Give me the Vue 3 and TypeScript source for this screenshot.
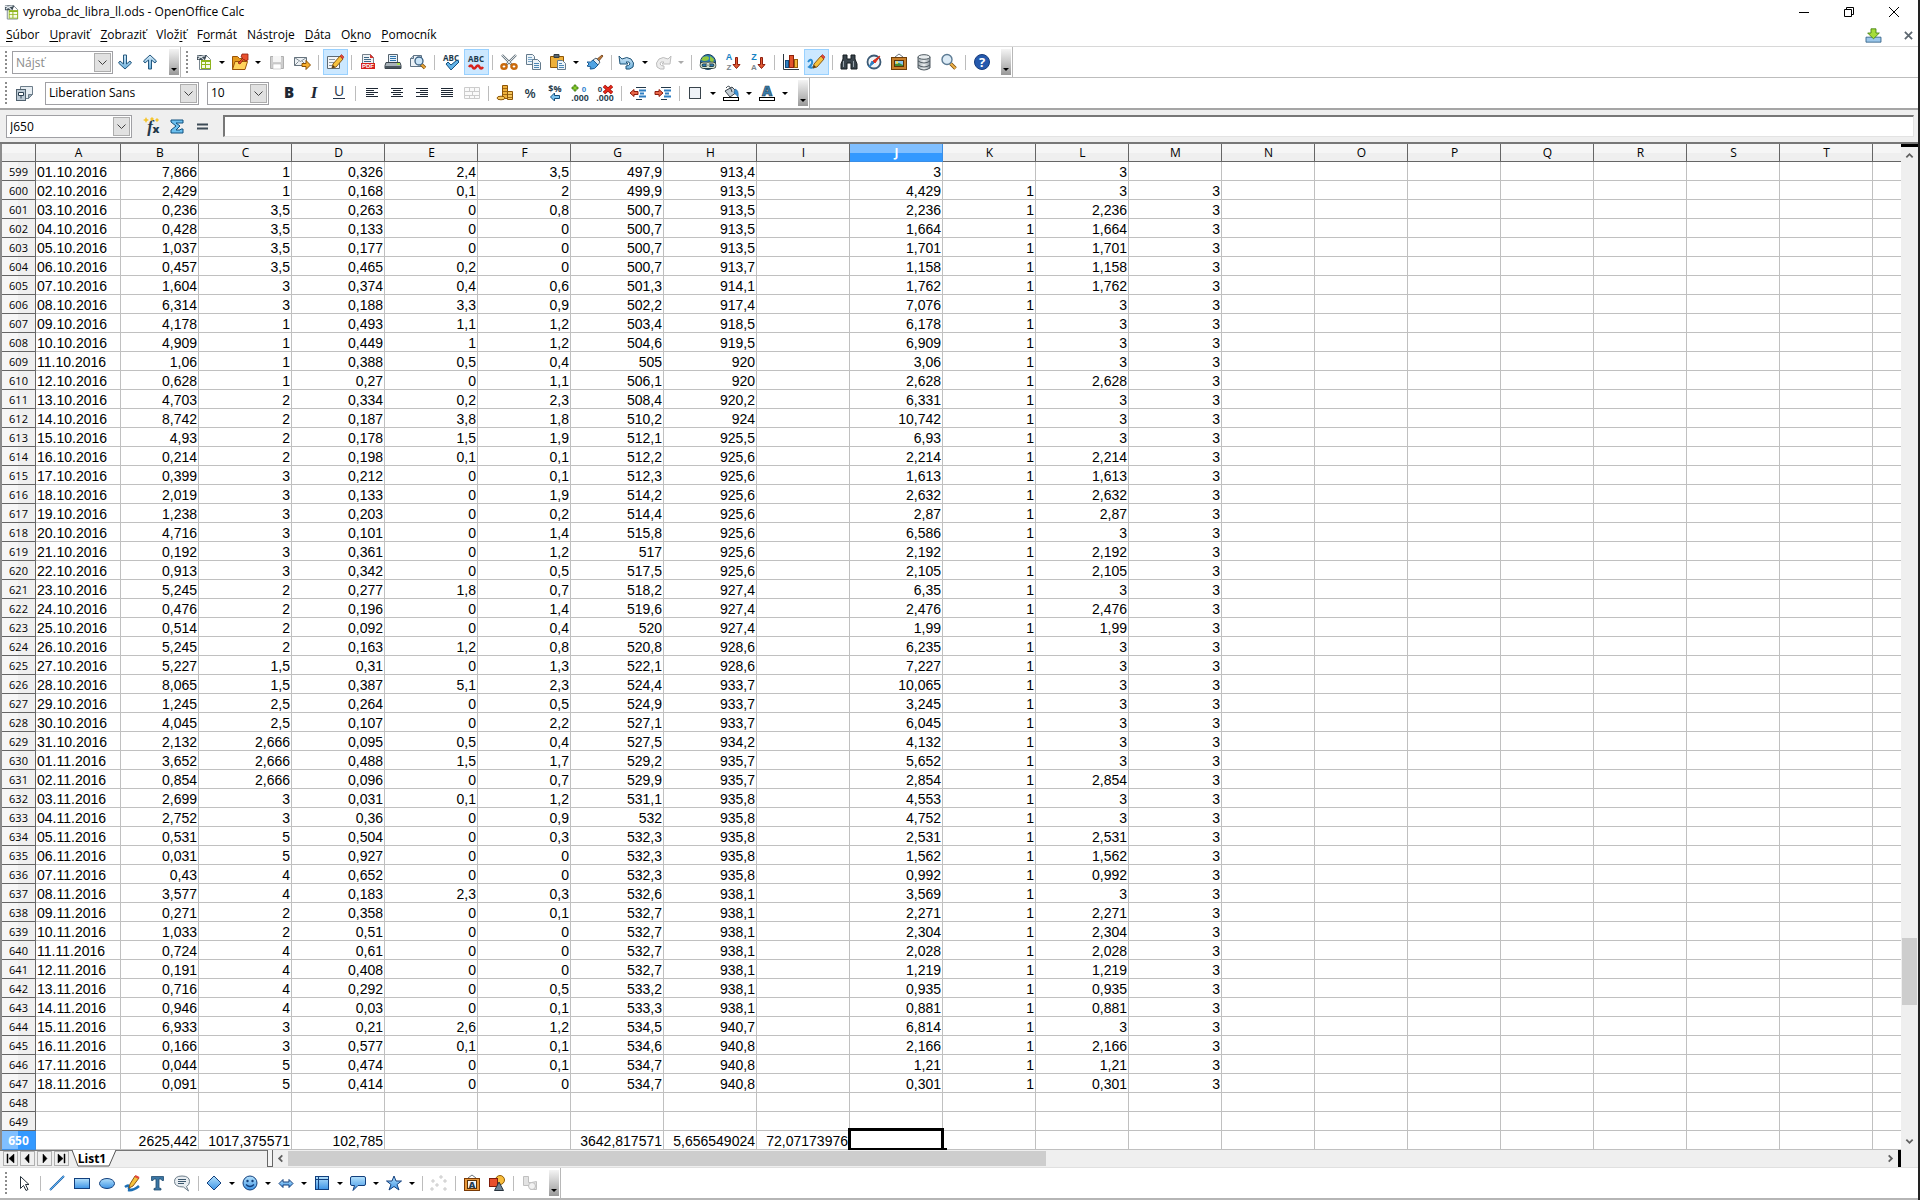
<script setup lang="ts">
import { ref } from 'vue'

interface Tool {
  icon?: string
  label?: string
  drop?: boolean
  on?: boolean
  off?: boolean
  sep?: boolean
}

const sep: Tool = { sep: true }

const menus = [
  ['', 'S', 'úbor'],
  ['', 'U', 'praviť'],
  ['', 'Z', 'obraziť'],
  ['Vlož', 'i', 'ť'],
  ['F', 'o', 'rmát'],
  ['Nás', 't', 'roje'],
  ['', 'D', 'áta'],
  ['O', 'k', 'no'],
  ['', 'P', 'omocník'],
]

const findTools: Tool[] = [
  { icon: 'down', label: 'Nájsť ďalšie' },
  { icon: 'up', label: 'Nájsť predchádzajúce' },
]

const standardTools: Tool[] = [
  { icon: 'calc', label: 'Nový', drop: true },
  { icon: 'open', label: 'Otvoriť', drop: true },
  { icon: 'save', label: 'Uložiť', off: true },
  { icon: 'mail', label: 'Odoslať e-mailom' },
  sep,
  { icon: 'edit', label: 'Upraviť súbor', on: true },
  sep,
  { icon: 'pdf', label: 'Exportovať do PDF' },
  { icon: 'print', label: 'Tlačiť' },
  { icon: 'preview', label: 'Ukážka strany' },
  sep,
  { icon: 'spell', label: 'Kontrola pravopisu' },
  { icon: 'autospell', label: 'Automatická kontrola pravopisu', on: true },
  sep,
  { icon: 'cut', label: 'Vystrihnúť' },
  { icon: 'copy', label: 'Kopírovať' },
  { icon: 'paste', label: 'Vložiť', drop: true },
  { icon: 'brush', label: 'Štetec formátu' },
  sep,
  { icon: 'undo', label: 'Späť', drop: true },
  { icon: 'redo', label: 'Znova', drop: true, off: true },
  sep,
  { icon: 'globe', label: 'Hypertextový odkaz' },
  { icon: 'sortaz', label: 'Zoradiť vzostupne' },
  { icon: 'sortza', label: 'Zoradiť zostupne' },
  sep,
  { icon: 'chart', label: 'Graf' },
  { icon: 'draw', label: 'Funkcie kreslenia', on: true },
  sep,
  { icon: 'binoc', label: 'Nájsť a nahradiť' },
  { icon: 'compass', label: 'Navigátor' },
  { icon: 'gallery', label: 'Galéria' },
  { icon: 'db', label: 'Zdroje údajov' },
  { icon: 'zoom', label: 'Lupa' },
  sep,
  { icon: 'help', label: 'Pomocník' },
]

const formatTools: Tool[] = [
  { icon: 'bold', label: 'Tučné' },
  { icon: 'italic', label: 'Kurzíva' },
  { icon: 'underline', label: 'Podčiarknuté' },
  sep,
  { icon: 'alignl', label: 'Zarovnať vľavo' },
  { icon: 'alignc', label: 'Centrovať' },
  { icon: 'alignr', label: 'Zarovnať vpravo' },
  { icon: 'alignj', label: 'Do bloku' },
  { icon: 'merge', label: 'Zlúčiť bunky', off: true },
  sep,
  { icon: 'coins', label: 'Mena' },
  { icon: 'percent', label: 'Percentá' },
  { icon: 'stdnum', label: 'Štandardný formát' },
  { icon: 'adddec', label: 'Pridať desatinné miesto' },
  { icon: 'deldec', label: 'Odobrať desatinné miesto' },
  sep,
  { icon: 'outdent', label: 'Zmenšiť odsadenie' },
  { icon: 'indent', label: 'Zväčšiť odsadenie' },
  sep,
  { icon: 'border', label: 'Orámovanie', drop: true },
  { icon: 'bucket', label: 'Farba pozadia', drop: true },
  { icon: 'fontcolor', label: 'Farba písma', drop: true },
]

const drawTools: Tool[] = [
  { icon: 'cursor', label: 'Vybrať' },
  sep,
  { icon: 'line', label: 'Čiara' },
  { icon: 'rect', label: 'Obdĺžnik' },
  { icon: 'ellipse', label: 'Elipsa' },
  { icon: 'freehand', label: 'Čiara voľnou rukou' },
  { icon: 'text', label: 'Text' },
  { icon: 'bubble', label: 'Popisy' },
  sep,
  { icon: 'diamond', label: 'Základné tvary', drop: true },
  { icon: 'smiley', label: 'Symboly', drop: true },
  { icon: 'arrows', label: 'Blokové šípky', drop: true },
  { icon: 'flow', label: 'Vývojové diagramy', drop: true },
  { icon: 'callout', label: 'Bubliny', drop: true },
  { icon: 'star', label: 'Hviezdy', drop: true },
  sep,
  { icon: 'points', label: 'Body', off: true },
  sep,
  { icon: 'fontwork', label: 'Galéria Fontwork' },
  { icon: 'fromfile', label: 'Zo súboru' },
  sep,
  { icon: 'extrude', label: 'Priestorové zobrazenie', off: true },
]

const lines = (rows: number[][]) =>
  rows.map(([x, y, w]) => `<rect x="${x}" y="${y}" width="${w}" height="1" fill="#1d2733"/>`).join('')

const calcArt =
  '<path d="M5.500 3.500h7l4 4v10h-11z" fill="#fff" stroke="#7a8791"/><path d="M3 3h10l-2 5H3z" fill="#3f4d58"/><path d="M3 4q4 0 7 4M4 7q4-4 7-3" stroke="#dfe6ea" stroke-width="1.200" fill="none"/><rect x="7" y="8" width="10" height="9" fill="#8fb51c"/><path d="M8 10h3v2H8zM12 10h4v2h-4zM8 13h3v3H8zM12 13h4v3h-4z" fill="#f7fbe8"/>'
const pencil =
  '<path d="M8 12L15 4l3 3-7 8-4 1z" fill="#f7c23c" stroke="#8b5a14"/><path d="M15 4l1.500-1.500 2.500 2.500L17.500 7z" fill="#e2493a" stroke="#a12a20" stroke-width=".6"/><path d="M7 16l1-3 2 2z" fill="#4a3520"/>'

const icons: Record<string, string> = {
  down: '<path d="M8.500 3h3v9l3.500-3 1.500 2-6.500 6-6.500-6L5 9l3.500 3z" fill="url(#steel)" stroke="#24587f" stroke-linejoin="round"/>',
  up: '<path d="M8.500 17h3V8l3.500 3 1.500-2L10 3 3.500 9 5 11l3.500-3z" fill="url(#steel)" stroke="#24587f" stroke-linejoin="round"/>',
  calc: calcArt,
  open: '<path d="M2.500 17.500v-13h5l2 2h7v4" fill="#e59a1b" stroke="#9b5408"/><path d="M2.500 17.500l2.500-8h12.500l-2.500 8z" fill="#ffd45c" stroke="#9b5408"/><path d="M8 11l5-5-2-1 1-3h6v6l-3 1-1-2-4 5z" fill="#e8502e" stroke="#8e1d0d" stroke-width=".8"/>',
  save: '<path d="M3.500 4.500h13v12h-13z" fill="#cfcfcf" stroke="#b0b0b0"/><path d="M6 4h8v6H6z" fill="#f6f6f6"/><path d="M6 12h8v5H6z" fill="#fff" stroke="#bbb" stroke-width=".6"/>',
  mail: '<path d="M2.500 5.500h12v8h-12z" fill="#eef2f5" stroke="#66737e"/><path d="M2.500 5.500l6 4 6-4M2.500 13.500l4-4M14 13l-4-4" fill="none" stroke="#66737e" stroke-width=".8"/><path d="M10 11.500h4v-3l4.500 4.500-4.500 4.500v-3h-4z" fill="#f6ae2d" stroke="#8a5005"/>',
  edit: '<path d="M2.500 4.500h12v12h-12z" fill="#f4f6f7" stroke="#5d6a74"/><path d="M4 7.500h6M4 10.500h5M4 13.500h3" stroke="#8a97a0"/>' + pencil,
  pdf: '<path d="M4.500 2.500h8l3 3v11h-11z" fill="#eef2f5" stroke="#75818b"/><path d="M12 2l4 4h-4z" fill="#d8332c"/><path d="M6 5.500h5M6 7.500h7M6 9.500h7" stroke="#3f6784"/><rect x="3" y="11" width="14" height="6" fill="#d5201c"/><text x="10" y="16" font-size="6" font-weight="700" text-anchor="middle" fill="#fff" font-family="Liberation Sans">PDF</text>',
  print: '<path d="M5.500 2.500h9v8h-9z" fill="#e7f1fa" stroke="#55636e"/><path d="M7 4.500h6M7 6.500h6M7 8.500h6" stroke="#2d74ab"/><path d="M3 10.500h14l1 3v3H2v-3z" fill="#a9b3ba" stroke="#39444c"/><path d="M2 14h16v2H2z" fill="#4a565e"/><rect x="14" y="11" width="3" height="2" fill="#a6e04f"/>',
  preview: '<path d="M5.500 3.500h8v11h-11v-8z" fill="#edf2f6" stroke="#5f7385"/><path d="M5.500 3.500v3h-3" fill="#b9c9d6" stroke="#5f7385"/><path d="M13 12l4 4" stroke="#7d4e0c" stroke-width="3.400"/><path d="M13 12l4 4" stroke="#eaa83a" stroke-width="1.800"/><circle cx="11" cy="9" r="4" fill="#cbe5f8" stroke="#3a5f80" stroke-width="1.300"/>',
  spell: '<text x="10" y="9" font-size="8" font-weight="700" text-anchor="middle" fill="#1d3a4c" font-family="Open Sans">ABC</text><path d="M5 12l2-2 3 3 6-5 2 2-8 8z" fill="#62b3e8" stroke="#13507e" stroke-linejoin="round"/>',
  autospell: '<text x="10" y="10" font-size="8" font-weight="700" text-anchor="middle" fill="#1d3a4c" font-family="Open Sans">ABC</text><path d="M3 15q2-3 3.500 0t3.500 0t3.500 0t3.500 0" fill="none" stroke="#d8231c" stroke-width="2.600"/>',
  cut: '<path d="M3 3l10 10M17 3L7 13" stroke="#6e7b84" stroke-width="2.400"/><path d="M3 3l9 9M17 3l-9 9" stroke="#dde3e7"/><ellipse cx="5" cy="14.500" rx="2.600" ry="2.300" fill="none" stroke="#c96a0e" stroke-width="2.400"/><ellipse cx="15" cy="14.500" rx="2.600" ry="2.300" fill="none" stroke="#c96a0e" stroke-width="2.400"/>',
  copy: '<path d="M2.500 2.500h6l2 2v8h-8z" fill="#edf4f9" stroke="#647a8c"/><path d="M4 5.500h4M4 7.500h5M4 9.500h5" stroke="#77a4c6"/><path d="M8.500 7.500h5l3 3v7h-8z" fill="#edf4f9" stroke="#647a8c"/><path d="M10 11.500h5M10 13.500h5M10 15.500h5" stroke="#4c87b5"/>',
  paste: '<path d="M2.500 4.500h13v11h-13z" fill="#eeb03a" stroke="#8d5507"/><path d="M6 5.500v-3h5v3z" fill="#59656d" stroke="#333c42"/><path d="M9.500 8.500h5l3 3v6h-8z" fill="#edf4f9" stroke="#647a8c"/><path d="M11 11.500h3M11 13.500h5M11 15.500h5" stroke="#4c87b5"/>',
  brush: '<path d="M11 8l6-5 1 1-5 6z" fill="#c07a3a" stroke="#6b3a10" stroke-width=".8"/><path d="M8 8l3-2 4 4-2 3z" fill="#e8edf0" stroke="#4d6273"/><path d="M8 8l5 5q-3 5-8 4l1-2-4-1 2-2-2-2q4 1 6-2z" fill="#4fa3e3" stroke="#1c5c94"/>',
  undo: '<path d="M2 4l3 3q5-3 9 0 4 4 2 8-3 3-7 2v-3q3 0 4-2 0-3-4-2l2 2H3z" fill="url(#steel)" stroke="#1f5478" stroke-linejoin="round"/>',
  redo: '<path d="M18 4l-3 3q-5-3-9 0-4 4-2 8 3 3 7 2v-3q-3 0-4-2 0-3 4-2l-2 2h8z" fill="#ececec" stroke="#bdbdbd" stroke-linejoin="round"/>',
  globe: '<circle cx="10" cy="10" r="7.500" fill="#2e7cb4" stroke="#173f5e"/><path d="M5 5q6-2 6 1T6 9L3 8zM12 4l4 3-1 4-3-2z" fill="#93c83e"/><rect x="3" y="11" width="8" height="4.500" rx="2.200" fill="none" stroke="#24332b" stroke-width="2.600"/><rect x="9" y="11" width="8" height="4.500" rx="2.200" fill="none" stroke="#24332b" stroke-width="2.600"/><rect x="3" y="11" width="8" height="4.500" rx="2.200" fill="none" stroke="#d7e6d9" stroke-width="1.200"/><rect x="9" y="11" width="8" height="4.500" rx="2.200" fill="none" stroke="#d7e6d9" stroke-width="1.200"/>',
  sortaz: '<text x="6" y="8" font-size="9" font-weight="700" text-anchor="middle" fill="#1583c4" font-family="Liberation Sans">A</text><text x="6" y="18" font-size="8" font-weight="700" text-anchor="middle" fill="#7b858c" font-family="Liberation Sans">Z</text><path d="M12.500 5.500h2v7h2.500l-3.500 4-3.500-4h2.500z" fill="#e05a33" stroke="#8e1d0d"/>',
  sortza: '<text x="6" y="8" font-size="9" font-weight="700" text-anchor="middle" fill="#1583c4" font-family="Liberation Sans">Z</text><text x="6" y="18" font-size="8" font-weight="700" text-anchor="middle" fill="#7b858c" font-family="Liberation Sans">A</text><path d="M12.500 5.500h2v7h2.500l-3.500 4-3.500-4h2.500z" fill="#e05a33" stroke="#8e1d0d"/>',
  chart: '<path d="M2.500 2v15.500H18" fill="none" stroke="#2b3740"/><rect x="4.500" y="8.500" width="3" height="7" fill="#2f7fc2" stroke="#164a78"/><rect x="8.500" y="3.500" width="4" height="12" fill="#e2532b" stroke="#8e220c"/><rect x="13.500" y="7.500" width="3" height="8" fill="#f4b63a" stroke="#93600b"/>',
  draw: '<path d="M2 10q3-4 4-1t-3 6q3 2 6-1" fill="none" stroke="#2a8ad0" stroke-width="2"/>' + pencil,
  binoc: '<path d="M4 3h4v4h4V3h4v4l2 5v5h-6v-6H8v6H2v-5l2-5z" fill="#39444c" stroke="#151c21"/><path d="M4.500 9v6M14.500 9v6" stroke="#9aa6ae"/>',
  compass: '<circle cx="10" cy="10" r="6.500" fill="#f1f5f8" stroke="#3c5a75" stroke-width="1.800"/><path d="M16 4l-5 7-2-2z" fill="#d9301f" stroke="#d9301f"/><path d="M5 15l3-6 2 2z" fill="#2f7fc2" stroke="#2f7fc2"/>',
  gallery: '<path d="M6 5l4-3 4 3" fill="none" stroke="#6b7780"/><rect x="2.500" y="5.500" width="15" height="12" fill="#c77f2b" stroke="#6e3d08"/><rect x="5.500" y="8.500" width="9" height="6" fill="#86c5ee" stroke="#5a3206"/><path d="M6 14v-2l4-1 4 2v1z" fill="#3f8c3a"/><circle cx="8" cy="10.500" r="1.200" fill="#ffe14a"/>',
  db: '<path d="M4 5v11q6 4 12 0V5z" fill="url(#metal)" stroke="#4e5960"/><ellipse cx="10" cy="5" rx="6" ry="2.300" fill="#e9edef" stroke="#4e5960"/><path d="M4 9q6 4 12 0M4 13q6 4 12 0" fill="none" stroke="#4e5960"/>',
  zoom: '<path d="M11.500 11.500l5 5" stroke="#7d4e0c" stroke-width="3.600"/><path d="M11.500 11.500l5 5" stroke="#f1b44a" stroke-width="1.800"/><circle cx="8" cy="7.500" r="5" fill="#dcebf6" stroke="#5c7b94" stroke-width="1.400"/>',
  help: '<circle cx="10" cy="10" r="7.500" fill="#2559ad" stroke="#163c7c"/><text x="10" y="15" font-size="13" font-weight="700" text-anchor="middle" fill="#fff" font-family="Open Sans">?</text>',
  styles: '<path d="M6.500 3.500h12v8l-4 4h-8z" fill="#e6edf2" stroke="#6d7d8a"/><path d="M18.500 11.500h-4v4z" fill="#9fb0bd" stroke="#6d7d8a"/><rect x="2.500" y="6.500" width="9" height="11" fill="#bccad5" stroke="#51626f"/><path d="M4.500 9.500h5v3h-5zM7 12.500v3" fill="#fff" stroke="#2c4152"/>',
  bold: '<text x="10" y="15" font-size="15" font-weight="800" text-anchor="middle" fill="#1d2733" font-family="Open Sans">B</text>',
  italic: '<text x="10" y="15" font-size="17" font-style="italic" text-anchor="middle" fill="#1d2733" font-family="Liberation Serif" font-weight="700">I</text>',
  underline: '<text x="10" y="13" font-size="14" text-anchor="middle" fill="#26354a" font-family="Open Sans">U</text><rect x="4" y="15" width="12" height="1" fill="#26354a"/>',
  alignl: lines([[4, 5, 12], [4, 7, 8], [4, 9, 12], [4, 11, 8], [4, 13, 12]]),
  alignc: lines([[4, 5, 12], [6, 7, 8], [4, 9, 12], [6, 11, 8], [4, 13, 12]]),
  alignr: lines([[4, 5, 12], [8, 7, 8], [4, 9, 12], [8, 11, 8], [4, 13, 12]]),
  alignj: lines([[4, 5, 12], [4, 7, 12], [4, 9, 12], [4, 11, 12], [4, 13, 12]]),
  merge: '<path d="M2.500 4.500h15v11h-15zM2.500 8.500h15M2.500 12.500h15M7.500 4.500v4M12.500 4.500v4M7.500 12.500v3M12.500 12.500v3M10.500 8.500v4" fill="#fafafa" stroke="#cccccc"/>',
  coins: '<path d="M7.500 2.500h5v13h-5z" fill="#f0b23c" stroke="#8d5507"/><path d="M7 5.500h6M7 8.500h6M7 11.500h6" stroke="#8d5507" stroke-width=".8"/><path d="M12.500 8.500h5v8h-5z" fill="#f6c75c" stroke="#8d5507"/><path d="M12 11.500h6M12 14.500h6" stroke="#8d5507" stroke-width=".8"/><ellipse cx="6" cy="15" rx="4" ry="1.800" fill="#f6c75c" stroke="#8d5507"/>',
  percent: '<text x="10" y="15" font-size="13" font-weight="600" text-anchor="middle" fill="#24394a" font-family="Open Sans">%</text>',
  stdnum: '<text x="10" y="9" font-size="9" font-weight="700" text-anchor="middle" fill="#24394a" font-family="Open Sans">$%</text><path d="M5.500 14l4-4v2.500h5v3h-5V18z" fill="#7cc4f0" stroke="#13507e"/>',
  adddec: '<path d="M4 2h2v2h2v2H6v2H4V6H2V4h2z" fill="#8ad02e" stroke="#3d7a0a" stroke-width=".8"/><text x="14" y="9" font-size="8" font-weight="700" text-anchor="middle" fill="#2f7fd0" font-family="Liberation Sans">0</text><text x="10" y="18" font-size="9" font-weight="700" text-anchor="middle" fill="#24394a" font-family="Liberation Sans">.000</text>',
  deldec: '<text x="5" y="9" font-size="8" font-weight="700" text-anchor="middle" fill="#24394a" font-family="Liberation Sans">0</text><text x="10" y="18" font-size="9" font-weight="700" text-anchor="middle" fill="#24394a" font-family="Liberation Sans">.000</text><path d="M9 3l8 7M17 3l-8 7" stroke="#8e1008" stroke-width="3.400"/><path d="M9 3l8 7M17 3l-8 7" stroke="#e8281c" stroke-width="2.200"/>',
  outdent: '<path d="M2 10l4-3.500v2h4v3H6v2z" fill="#e8674a" stroke="#8e1d0d"/><path d="M8 4.500h10M8 16.500h6" stroke="#24394a"/><path d="M11 7.500h7M12 10.500h4M11 13.500h7" stroke="#2f7fc2" stroke-width="2"/>',
  indent: '<path d="M10 10L6 6.500v2H2v3h4v2z" fill="#e8674a" stroke="#8e1d0d"/><path d="M8 4.500h10M8 16.500h6" stroke="#24394a"/><path d="M11 7.500h7M12 10.500h4M11 13.500h7" stroke="#2f7fc2" stroke-width="2"/>',
  border: '<rect x="4.500" y="4.500" width="11" height="11" fill="#eef2f7" stroke="#39444c"/>',
  bucket: '<path d="M4 8l7-4 5 5-7 5z" fill="#c3ccd3" stroke="#39444c"/><path d="M5 5q3-4 5 1l1 3" fill="none" stroke="#39444c"/><path d="M14 6q4 1 3 8-2-3-4-4z" fill="#3c93d6" stroke="#1d5d92" stroke-width=".6"/><rect x="2.500" y="14.500" width="15" height="3" fill="#fff" stroke="#000"/>',
  fontcolor: '<text x="10" y="13" font-size="14" font-weight="800" text-anchor="middle" fill="#3a7ca8" stroke="#1b3c55" stroke-width=".6" font-family="Open Sans">A</text><rect x="2.500" y="14.500" width="15" height="3" fill="#fff" stroke="#000"/>',
  fx: '<text x="8" y="16" font-size="17" font-style="italic" font-weight="700" text-anchor="middle" fill="#24394a" font-family="Liberation Serif">f</text><text x="14" y="17" font-size="11" font-weight="800" text-anchor="middle" fill="#24394a" font-family="Open Sans">x</text><path d="M4 1l1 2 2 1-2 1-1 2-1-2-2-1 2-1zM10 1l1 1 1 1-1 1-1 1-1-1-1-1 1-1zM15 2l1 1 1 1-1 1-1 1-1-1-1-1 1-1z" fill="#f6c52e"/>',
  sum: '<path d="M4 4h12v3h-3H9l4 3-4 4h4l1-1h2v4H4v-3l5-4-5-4z" fill="#6cc0ef" stroke="#11507e" stroke-linejoin="round"/>',
  equals: '<path d="M5 8.500h11M5 12.500h11" stroke="#3d4b56" stroke-width="2"/>',
  cursor: '<path d="M6.500 3.500v12l3-3 2.500 5 2-1-2.500-5h3.500z" fill="#fff" stroke="#25303a"/>',
  line: '<path d="M3 17L17 3" stroke="#1c5fa8" stroke-width="2"/><path d="M3 17L17 3" stroke="#58b0f0"/>',
  rect: '<rect x="2.500" y="5.500" width="15" height="10" fill="url(#blue)" stroke="#123f7d"/>',
  ellipse: '<ellipse cx="10" cy="10.500" rx="7.500" ry="5" fill="url(#blue)" stroke="#123f7d"/>',
  freehand: '<path d="M3 14q4-3 4 0t-1 3q5 1 11-4" fill="none" stroke="#1c6fb5" stroke-width="2.600"/><path d="M8 11l5-8 4 2-6 8-4 2z" fill="#f7c23c" stroke="#8b5a14"/><path d="M13.500 2l4 2-1 2-4-2z" fill="#e2493a"/>',
  text: '<path d="M4.500 3.500h12v4H15L14 6h-2v9l2 .5V17H7v-1.500l2-.5V6H7L6 7.500H4.500z" fill="#3a76a4" stroke="#1f4b70" stroke-width=".8"/>',
  bubble: '<path d="M10 3q7.500 0 7.500 5.500 0 3.500-3 5l2 4.500-5-4q-9 0-9-5.500Q2.500 3 10 3z" fill="#e8edf1" stroke="#6d7d8a"/><path d="M6 6.500h8M6 8.500h8M6 10.500h6" stroke="#3b566c"/>',
  diamond: '<path d="M10 3l7 7-7 7-7-7z" fill="url(#blue)" stroke="#123f7d"/>',
  smiley: '<circle cx="10" cy="10" r="7" fill="url(#blue)" stroke="#123f7d"/><circle cx="7.500" cy="8" r="1.200" fill="#123f7d"/><circle cx="12.500" cy="8" r="1.200" fill="#123f7d"/><path d="M6 11.500q4 4 8 0" fill="none" stroke="#123f7d" stroke-width="1.300"/>',
  arrows: '<path d="M3 10.500l4-4V9h6V6.500l4 4-4 4V12H7v2.500z" fill="url(#blue)" stroke="#123f7d"/>',
  flow: '<rect x="3.500" y="3.500" width="13" height="13" fill="url(#blue)" stroke="#123f7d"/><path d="M6.500 3.500v13M3.500 6.500h13" stroke="#123f7d"/>',
  callout: '<path d="M4 3.500h12q1.500 0 1.500 1.500v6q0 1.500-1.500 1.500h-6l-5 5 1.500-5H4q-1.500 0-1.500-1.500V5Q2.500 3.500 4 3.500z" fill="url(#blue)" stroke="#123f7d"/>',
  star: '<path d="M10 3l2 5h5.500l-4.500 3.500 2 5.500-5-3.500L5 17l2-5.500L2.500 8H8z" fill="url(#blue)" stroke="#123f7d"/>',
  points: '<g fill="#f4f4f4" stroke="#c8c8c8"><circle cx="4" cy="8" r="1.200"/><circle cx="12" cy="4" r="1.200"/><circle cx="8" cy="12" r="1.200"/><circle cx="16" cy="8" r="1.200"/><circle cx="3" cy="16" r="1.200"/><circle cx="16" cy="16" r="1.200"/></g>',
  fontwork: '<path d="M6 5l4-3 4 3" fill="none" stroke="#6b7780"/><rect x="2.500" y="5.500" width="15" height="12" fill="#e8973a" stroke="#7a3a05"/><rect x="5.500" y="7.500" width="9" height="8" fill="#f4f6f8" stroke="#5a3206"/><text x="10" y="15" font-size="9" font-weight="800" text-anchor="middle" fill="#203a50" font-family="Open Sans">A</text>',
  fromfile: '<circle cx="13" cy="7" r="4.500" fill="#f8bd3c" stroke="#935e08"/><rect x="2.500" y="5.500" width="8" height="8" fill="#e8502e" stroke="#7f1c0a"/><path d="M12 9l4.500 8.500h-9z" fill="#6e8395" stroke="#27333d"/>',
  extrude: '<path d="M3.500 3.500h5v6h3l5-1v8h-6v-4h-7z" fill="#e3e3e3" stroke="#c0c0c0"/><circle cx="12" cy="13" r="3.500" fill="#f2f2f2" stroke="#c0c0c0"/>',
  update: '<path d="M1 11h18v6H1z" fill="#9cc7ea" stroke="#2d5c82"/><path d="M7 1h6v5h4l-7 7-7-7h4z" fill="#a6dc3a" stroke="#3f7d0c" stroke-linejoin="round"/>',
}

const columns = 'ABCDEFGHIJKLMNOPQRST'.split('')

/* Production B..H and the buffer value J, one line per day */
const daily = `7,866 1 0,326 2,4 3,5 497,9 913,4 3
2,429 1 0,168 0,1 2 499,9 913,5 4,429
0,236 3,5 0,263 0 0,8 500,7 913,5 2,236
0,428 3,5 0,133 0 0 500,7 913,5 1,664
1,037 3,5 0,177 0 0 500,7 913,5 1,701
0,457 3,5 0,465 0,2 0 500,7 913,7 1,158
1,604 3 0,374 0,4 0,6 501,3 914,1 1,762
6,314 3 0,188 3,3 0,9 502,2 917,4 7,076
4,178 1 0,493 1,1 1,2 503,4 918,5 6,178
4,909 1 0,449 1 1,2 504,6 919,5 6,909
1,06 1 0,388 0,5 0,4 505 920 3,06
0,628 1 0,27 0 1,1 506,1 920 2,628
4,703 2 0,334 0,2 2,3 508,4 920,2 6,331
8,742 2 0,187 3,8 1,8 510,2 924 10,742
4,93 2 0,178 1,5 1,9 512,1 925,5 6,93
0,214 2 0,198 0,1 0,1 512,2 925,6 2,214
0,399 3 0,212 0 0,1 512,3 925,6 1,613
2,019 3 0,133 0 1,9 514,2 925,6 2,632
1,238 3 0,203 0 0,2 514,4 925,6 2,87
4,716 3 0,101 0 1,4 515,8 925,6 6,586
0,192 3 0,361 0 1,2 517 925,6 2,192
0,913 3 0,342 0 0,5 517,5 925,6 2,105
5,245 2 0,277 1,8 0,7 518,2 927,4 6,35
0,476 2 0,196 0 1,4 519,6 927,4 2,476
0,514 2 0,092 0 0,4 520 927,4 1,99
5,245 2 0,163 1,2 0,8 520,8 928,6 6,235
5,227 1,5 0,31 0 1,3 522,1 928,6 7,227
8,065 1,5 0,387 5,1 2,3 524,4 933,7 10,065
1,245 2,5 0,264 0 0,5 524,9 933,7 3,245
4,045 2,5 0,107 0 2,2 527,1 933,7 6,045
2,132 2,666 0,095 0,5 0,4 527,5 934,2 4,132
3,652 2,666 0,488 1,5 1,7 529,2 935,7 5,652
0,854 2,666 0,096 0 0,7 529,9 935,7 2,854
2,699 3 0,031 0,1 1,2 531,1 935,8 4,553
2,752 3 0,36 0 0,9 532 935,8 4,752
0,531 5 0,504 0 0,3 532,3 935,8 2,531
0,031 5 0,927 0 0 532,3 935,8 1,562
0,43 4 0,652 0 0 532,3 935,8 0,992
3,577 4 0,183 2,3 0,3 532,6 938,1 3,569
0,271 2 0,358 0 0,1 532,7 938,1 2,271
1,033 2 0,51 0 0 532,7 938,1 2,304
0,724 4 0,61 0 0 532,7 938,1 2,028
0,191 4 0,408 0 0 532,7 938,1 1,219
0,716 4 0,292 0 0,5 533,2 938,1 0,935
0,946 4 0,03 0 0,1 533,3 938,1 0,881
6,933 3 0,21 2,6 1,2 534,5 940,7 6,814
0,166 3 0,577 0,1 0,1 534,6 940,8 2,166
0,044 5 0,474 0 0,1 534,7 940,8 1,21
0,091 5 0,414 0 0 534,7 940,8 0,301`.split('\n')

const pad = (n: number) => String(n).padStart(2, '0')
const fill = (cells: string[]) => [...cells, ...Array(columns.length + 1 - cells.length).fill('')]

const rows = daily.map((text, i) => {
  const v = text.split(' ')
  const day = new Date(Date.UTC(2016, 9, 1 + i))
  const date = `${pad(day.getUTCDate())}.${pad(day.getUTCMonth() + 1)}.${day.getUTCFullYear()}`
  const j = v[7]
  const capped = parseFloat(j.replace(',', '.')) < 3 ? j : '3'
  const first = i === 0
  return {
    n: 599 + i,
    cells: fill([date, ...v.slice(0, 7), '', j, first ? '' : '1', capped, first ? '' : '3']),
  }
})
rows.push({ n: 648, cells: fill([]) })
rows.push({ n: 649, cells: fill([]) })
rows.push({
  n: 650,
  cells: fill(['', '2625,442', '1017,375571', '102,785', '', '', '3642,817571', '5,656549024', '72,07173976']),
})

const search = ref('')
const formula = ref('')
const cellName = ref('J650')
const fontName = ref('Liberation Sans')
const fontSize = ref('10')

const tabNav = [
  { label: 'Prvý hárok', d: 'M3 2v9h1V2zM10 2v9L5 6.500z' },
  { label: 'Predchádzajúci hárok', d: 'M8 2v9L4 6.500z' },
  { label: 'Nasledujúci hárok', d: 'M5 2v9l4-4.500z' },
  { label: 'Posledný hárok', d: 'M9 2v9h1V2zM3 2v9l5-4.500z' },
]
</script>

<template>
  <div class="window">
    <svg class="defs" width="0" height="0" aria-hidden="true">
      <defs>
        <linearGradient id="blue" x1="0" y1="0" x2="0" y2="1">
          <stop offset="0" stop-color="#b5e1fb" />
          <stop offset="1" stop-color="#3d94e6" />
        </linearGradient>
        <linearGradient id="steel" x1="0" y1="0" x2="0" y2="1">
          <stop offset="0" stop-color="#d3e8f6" />
          <stop offset="1" stop-color="#6bb0dd" />
        </linearGradient>
        <linearGradient id="metal" x1="0" y1="0" x2="1" y2="0">
          <stop offset="0" stop-color="#9ba5ab" />
          <stop offset="0.5" stop-color="#f0f3f4" />
          <stop offset="1" stop-color="#87929a" />
        </linearGradient>
      </defs>
    </svg>

    <header class="title">
      <svg class="app-icon" viewBox="2 2 16 16" v-html="icons.calc" />
      <span class="caption">vyroba_dc_libra_ll.ods - OpenOffice Calc</span>
      <button class="win" aria-label="Minimalizovať">
        <svg viewBox="0 0 12 12"><path d="M1 6.500h10" stroke="#000" /></svg>
      </button>
      <button class="win" aria-label="Obnoviť">
        <svg viewBox="0 0 12 12"><path d="M1.500 3.500h7v7h-7zM3.500 3V1.500h7v7H9" fill="none" stroke="#000" /></svg>
      </button>
      <button class="win" aria-label="Zavrieť">
        <svg viewBox="0 0 12 12"><path d="M1 1l10 10M11 1L1 11" stroke="#000" /></svg>
      </button>
    </header>

    <nav class="menu">
      <button v-for="m in menus" :key="m.join('')" class="menu-item">{{ m[0] }}<u>{{ m[1] }}</u>{{ m[2] }}</button>
      <span class="spring"></span>
      <button class="plain" aria-label="Aktualizácie"><svg class="update" viewBox="0 0 20 18" v-html="icons.update" /></button>
      <button class="plain doc-close" aria-label="Zavrieť dokument">
        <svg viewBox="0 0 10 10"><path d="M1 1l8 8M9 1L1 9" stroke="#5d6770" stroke-width="2" /></svg>
      </button>
    </nav>

    <div class="bar">
      <div class="toolbar">
        <span class="grip"></span>
        <div class="combo find">
          <input v-model="search" type="text" placeholder="Nájsť" aria-label="Nájsť" />
          <button class="arrow" aria-label="História hľadania">
            <svg viewBox="0 0 9 9"><path d="M.5 2.500l4 4 4-4" fill="none" stroke="#404040" /></svg>
          </button>
        </div>
        <button v-for="t in findTools" :key="t.icon" class="tool" :aria-label="t.label">
          <svg viewBox="0 0 20 20" v-html="icons[t.icon!]" />
        </button>
        <button class="more" aria-label="Viac"></button>
      </div>
      <div class="toolbar">
        <span class="grip"></span>
        <template v-for="(t, i) in standardTools" :key="i">
          <span v-if="t.sep" class="sep"></span>
          <button v-else class="tool" :class="{ drop: t.drop, on: t.on, off: t.off }" :aria-label="t.label">
            <svg viewBox="0 0 20 20" v-html="icons[t.icon!]" />
          </button>
        </template>
        <button class="more" aria-label="Viac"></button>
      </div>
    </div>

    <div class="bar last">
      <div class="toolbar">
        <span class="grip"></span>
        <button class="tool" aria-label="Štýly a formátovanie"><svg viewBox="0 0 20 20" v-html="icons.styles" /></button>
        <div class="combo font">
          <select v-model="fontName" aria-label="Názov písma">
            <option>Liberation Sans</option>
          </select>
          <span class="arrow">
            <svg viewBox="0 0 9 9"><path d="M.5 2.500l4 4 4-4" fill="none" stroke="#404040" /></svg>
          </span>
        </div>
        <div class="combo size">
          <select v-model="fontSize" aria-label="Veľkosť písma">
            <option>10</option>
          </select>
          <span class="arrow">
            <svg viewBox="0 0 9 9"><path d="M.5 2.500l4 4 4-4" fill="none" stroke="#404040" /></svg>
          </span>
        </div>
        <template v-for="(t, i) in formatTools" :key="i">
          <span v-if="t.sep" class="sep"></span>
          <button v-else class="tool" :class="{ drop: t.drop, on: t.on, off: t.off }" :aria-label="t.label">
            <svg viewBox="0 0 20 20" v-html="icons[t.icon!]" />
          </button>
        </template>
        <button class="more" aria-label="Viac"></button>
      </div>
    </div>

    <div class="formula-bar">
      <div class="combo name">
        <input v-model="cellName" type="text" aria-label="Pole názvu" />
        <button class="arrow" aria-label="Zoznam názvov">
          <svg viewBox="0 0 9 9"><path d="M.5 2.500l4 4 4-4" fill="none" stroke="#404040" /></svg>
        </button>
      </div>
      <div class="fn">
        <button class="tool" aria-label="Sprievodca funkciou"><svg viewBox="0 0 20 20" v-html="icons.fx" /></button>
        <button class="tool" aria-label="Súčet"><svg viewBox="0 0 20 20" v-html="icons.sum" /></button>
        <button class="tool" aria-label="Funkcia"><svg viewBox="0 0 20 20" v-html="icons.equals" /></button>
      </div>
      <input v-model="formula" class="formula" type="text" aria-label="Vstupný riadok" />
    </div>

    <main class="sheet">
      <div class="grid-wrap">
        <table class="grid">
          <colgroup>
            <col class="c-head" />
            <col class="c-a" />
            <col class="c-b" />
            <col v-for="n in 18" :key="n" class="c-std" />
            <col />
          </colgroup>
          <thead>
            <tr>
              <th></th>
              <th v-for="c in columns" :key="c" scope="col" :class="{ sel: c === 'J' }">{{ c }}</th>
              <th></th>
            </tr>
          </thead>
          <tbody>
            <tr v-for="r in rows" :key="r.n">
              <th scope="row" :class="{ sel: r.n === 650 }">{{ r.n }}</th>
              <td v-for="(c, i) in r.cells" :key="i" :class="{ active: r.n === 650 && i === 9 }">{{ c }}</td>
            </tr>
          </tbody>
        </table>
      </div>
      <div class="vscroll">
        <span class="split-h"></span>
        <button class="scroll-btn" aria-label="Nahor">
          <svg viewBox="0 0 10 10"><path d="M1.500 7L5 3.500 8.500 7" fill="none" stroke="#606060" stroke-width="2" /></svg>
        </button>
        <div class="vtrack"><div class="vthumb"></div></div>
        <button class="scroll-btn" aria-label="Nadol">
          <svg viewBox="0 0 10 10"><path d="M1.500 3L5 6.500 8.500 3" fill="none" stroke="#606060" stroke-width="2" /></svg>
        </button>
      </div>
    </main>

    <div class="tabs">
      <div class="tab-area">
        <button v-for="t in tabNav" :key="t.label" class="nav" :aria-label="t.label">
          <svg viewBox="0 0 13 13"><path :d="t.d" fill="#000" stroke="#000" stroke-width=".5" /></svg>
        </button>
        <button class="tab">
          <svg viewBox="0 0 46 17" aria-hidden="true">
            <path d="M1 0l6 16h31l7-16z" fill="#fff" />
            <path d="M1 0l6 16h31l7-16" fill="none" stroke="#555" />
          </svg>
          <span>List1</span>
        </button>
      </div>
      <span class="splitter"></span>
      <button class="scroll-btn side" aria-label="Doľava">
        <svg viewBox="0 0 10 10"><path d="M7 1.500L3.500 5 7 8.500" fill="none" stroke="#606060" stroke-width="2" /></svg>
      </button>
      <div class="htrack"><div class="hthumb"></div></div>
      <button class="scroll-btn side" aria-label="Doprava">
        <svg viewBox="0 0 10 10"><path d="M3 1.500L6.500 5 3 8.500" fill="none" stroke="#606060" stroke-width="2" /></svg>
      </button>
      <span class="split-v"></span>
      <span class="corner"></span>
    </div>

    <div class="bar bottom">
      <div class="toolbar">
        <span class="grip"></span>
        <template v-for="(t, i) in drawTools" :key="i">
          <span v-if="t.sep" class="sep"></span>
          <button v-else class="tool" :class="{ drop: t.drop, off: t.off }" :aria-label="t.label">
            <svg viewBox="0 0 20 20" v-html="icons[t.icon!]" />
          </button>
        </template>
        <button class="more" aria-label="Viac"></button>
      </div>
    </div>
  </div>
</template>

<style>
body {
  margin: 0;
  background: #fff;
}
</style>

<style scoped>
* {
  box-sizing: border-box;
}
.window {
  display: flex;
  flex-direction: column;
  min-height: 100vh;
  border-right: 2px solid #222;
  background: #fff;
  color: #000;
  font: 12px/16px "Open Sans", "Noto Sans", sans-serif;
  overflow: hidden;
}
.defs {
  position: absolute;
}
button,
input,
select {
  margin: 0;
  padding: 0;
  border: 0;
  border-radius: 0;
  background: transparent;
  color: inherit;
  font: inherit;
}
svg {
  display: block;
  overflow: visible;
}

.title {
  display: flex;
  align-items: center;
  height: 24px;
  padding: 0 2px 0 4px;
}
.app-icon {
  width: 15px;
  height: 16px;
}
.caption {
  flex: 1;
  padding-left: 4px;
}
.win {
  display: flex;
  align-items: center;
  justify-content: center;
  width: 45px;
  height: 20px;
}
.win svg {
  width: 12px;
  height: 12px;
}

.menu {
  display: flex;
  align-items: center;
  gap: 10px;
  height: 23px;
  padding: 0 5px 0 6px;
  border-bottom: 1px solid #d8d8d8;
}
.menu-item {
  white-space: nowrap;
}
.menu-item u {
  text-underline-offset: 2px;
}
.spring {
  flex: 1;
}
.update {
  width: 17px;
  height: 15px;
}
.doc-close {
  padding-left: 12px;
}
.doc-close svg {
  width: 9px;
  height: 9px;
}

.bar {
  display: flex;
  height: 31px;
  border-bottom: 1px solid #bdbdbd;
}
.bar.last {
  height: 32px;
  border-bottom: 2px solid #a5a5a5;
}
.bar.bottom {
  height: 32px;
  border-bottom: 2px solid #b5b5b5;
}
.toolbar {
  display: flex;
  align-items: center;
  padding: 0 1px 0 5px;
  border-right: 1px solid #b8b8b8;
}
.grip {
  width: 2px;
  height: 22px;
  margin-right: 5px;
  background: repeating-linear-gradient(#8c8c8c 0 2px, transparent 2px 4px);
}
.tool {
  display: flex;
  align-items: center;
  flex: none;
  width: 25px;
  height: 26px;
  padding-left: 2px;
}
.tool svg {
  width: 20px;
  height: 20px;
}
.tool.on {
  padding-left: 1px;
  border: 1px solid #99d1ff;
  background: #cce8ff;
}
.tool.drop {
  width: 36px;
  padding-left: 1px;
}
.tool.drop::after {
  content: "";
  margin-left: 5px;
  border: 3px solid transparent;
  border-top-color: #000;
  border-bottom: 0;
}
.tool.drop.off::after {
  border-top-color: #aaa;
}
.sep {
  width: 8px;
  height: 15px;
  background: linear-gradient(#bcbcbc, #bcbcbc) 3px 0 / 1px 100% no-repeat;
}
.more {
  display: flex;
  align-items: flex-end;
  justify-content: center;
  width: 10px;
  height: 26px;
  margin-left: 6px;
  padding-bottom: 4px;
  background: linear-gradient(#f4f4f4, #c8c8c8 50%, #999);
}
.more::after {
  content: "";
  border: 3px solid transparent;
  border-top-color: #000;
  border-bottom: 0;
}

.combo {
  position: relative;
  display: flex;
  height: 23px;
  border: 1px solid #a0a0a4;
  background: #fff;
}
.combo input,
.combo select {
  flex: 1;
  min-width: 0;
  height: 21px;
  padding-left: 3px;
  outline: 0;
  appearance: none;
}
.combo input::placeholder {
  color: #8a8a8a;
  opacity: 1;
}
.combo .arrow {
  position: absolute;
  top: 1px;
  right: 1px;
  bottom: 1px;
  display: flex;
  align-items: center;
  justify-content: center;
  width: 17px;
  border: 1px solid #adadad;
  background: #e1e1e1;
  pointer-events: none;
}
.combo .arrow svg {
  width: 9px;
  height: 9px;
}
.find {
  width: 101px;
}
.font {
  width: 154px;
  margin: 0 8px;
}
.size {
  width: 62px;
  margin-right: 8px;
}

.formula-bar {
  display: flex;
  align-items: center;
  height: 34px;
  padding: 0 4px 0 6px;
  border-bottom: 2px solid #777;
  background: #efefef;
}
.name {
  width: 126px;
}
.fn {
  display: flex;
  padding: 0 8px;
}
.formula {
  flex: 1;
  height: 22px;
  border: 1px solid #e3e3e3;
  border-top: 2px solid #777;
  border-left: 2px solid #777;
  background: #fff;
}

.sheet {
  display: flex;
  flex: 1;
}
.grid-wrap {
  flex: 1;
  min-width: 0;
  overflow: hidden;
  border-left: 2px solid #8c8c8c;
}
.grid {
  width: 100%;
  table-layout: fixed;
  border-collapse: separate;
  border-spacing: 0;
}
.c-head {
  width: 34px;
}
.c-a {
  width: 85px;
}
.c-b {
  width: 78px;
}
.c-std {
  width: 93px;
}
.grid th {
  height: 19px;
  padding: 0 0 0 1px;
  border-right: 1px solid #666;
  border-bottom: 1px solid #666;
  font-weight: 400;
  line-height: 16px;
  text-align: center;
}
.grid thead th {
  height: 18px;
  background: linear-gradient(#f6f6f6 50%, #efefef 50%);
}
.grid thead th:last-child {
  border-right: 0;
}
.grid tbody th {
  padding: 1px 0 0;
  background: linear-gradient(90deg, #f6f6f6 50%, #efefef 50%);
  font-size: 11px;
}
.grid thead th.sel {
  border-color: #3a8ee6;
  background: linear-gradient(#80bfff 50%, #3399ff 50%);
  color: #fff;
  font-weight: 700;
}
.grid tbody th.sel {
  border-color: #3a8ee6;
  background: linear-gradient(90deg, #80bfff 50%, #3399ff 50%);
  color: #fff;
  font-size: 12px;
  font-weight: 700;
}
.grid td {
  height: 19px;
  padding: 2px 1px 0;
  border-right: 1px solid #c0c0c0;
  border-bottom: 1px solid #c0c0c0;
  font: 14px/16px "Liberation Sans", Arial, sans-serif;
  text-align: right;
  white-space: nowrap;
}
.grid td:nth-child(2) {
  text-align: left;
}
.grid td:last-child {
  border-right: 0;
}
.grid td.active {
  position: relative;
}
.grid td.active::before {
  content: "";
  position: absolute;
  inset: -3px -2px -1px -2px;
  border: 3px solid #000;
  border-bottom-width: 2px;
}
.grid td.active::after {
  content: "";
  position: absolute;
  right: -5px;
  bottom: -1px;
  width: 5px;
  height: 2px;
  background: #000;
}

.vscroll {
  display: flex;
  flex-direction: column;
  width: 17px;
  padding: 0 1px;
  background: #efefef;
}
.split-h {
  height: 3px;
  margin: 0 -1px;
  background: #000;
}
.scroll-btn {
  display: flex;
  align-items: center;
  justify-content: center;
  width: 15px;
  height: 17px;
}
.scroll-btn svg {
  width: 9px;
  height: 9px;
}
.vtrack {
  display: flex;
  flex: 1;
  flex-direction: column;
}
.vtrack::before {
  content: "";
  flex: 774;
}
.vtrack::after {
  content: "";
  flex: 128;
}
.vthumb {
  flex: 67;
  background: #cdcdcd;
}

.tabs {
  display: flex;
  height: 18px;
  border-bottom: 1px solid #e0e0e0;
  background: #efefef;
}
.tab-area {
  display: flex;
  gap: 2px;
  width: 267px;
  padding-left: 3px;
  border-top: 1px solid #777;
}
.nav {
  width: 15px;
  height: 15px;
  border: 1px solid #b0b0b0;
}
.nav svg {
  width: 13px;
  height: 13px;
}
.tab {
  position: relative;
  width: 46px;
  height: 16px;
  padding: 0 4px 1px 0;
  font-weight: 700;
  line-height: 14px;
}
.tab svg {
  position: absolute;
  top: -1px;
  left: 0;
  width: 46px;
  height: 17px;
}
.tab span {
  position: relative;
}
.splitter {
  width: 6px;
  height: 17px;
  border: 1px solid #666;
  border-top: 0;
  background: #f4f4f4;
}
.side {
  height: 17px;
}
.htrack {
  display: flex;
  flex: 1;
  padding: 1px 0;
}
.htrack::after {
  content: "";
  flex: 836;
}
.hthumb {
  flex: 758;
  background: #cdcdcd;
}
.split-v {
  width: 3px;
  background: #000;
}
.corner {
  width: 17px;
}
</style>
